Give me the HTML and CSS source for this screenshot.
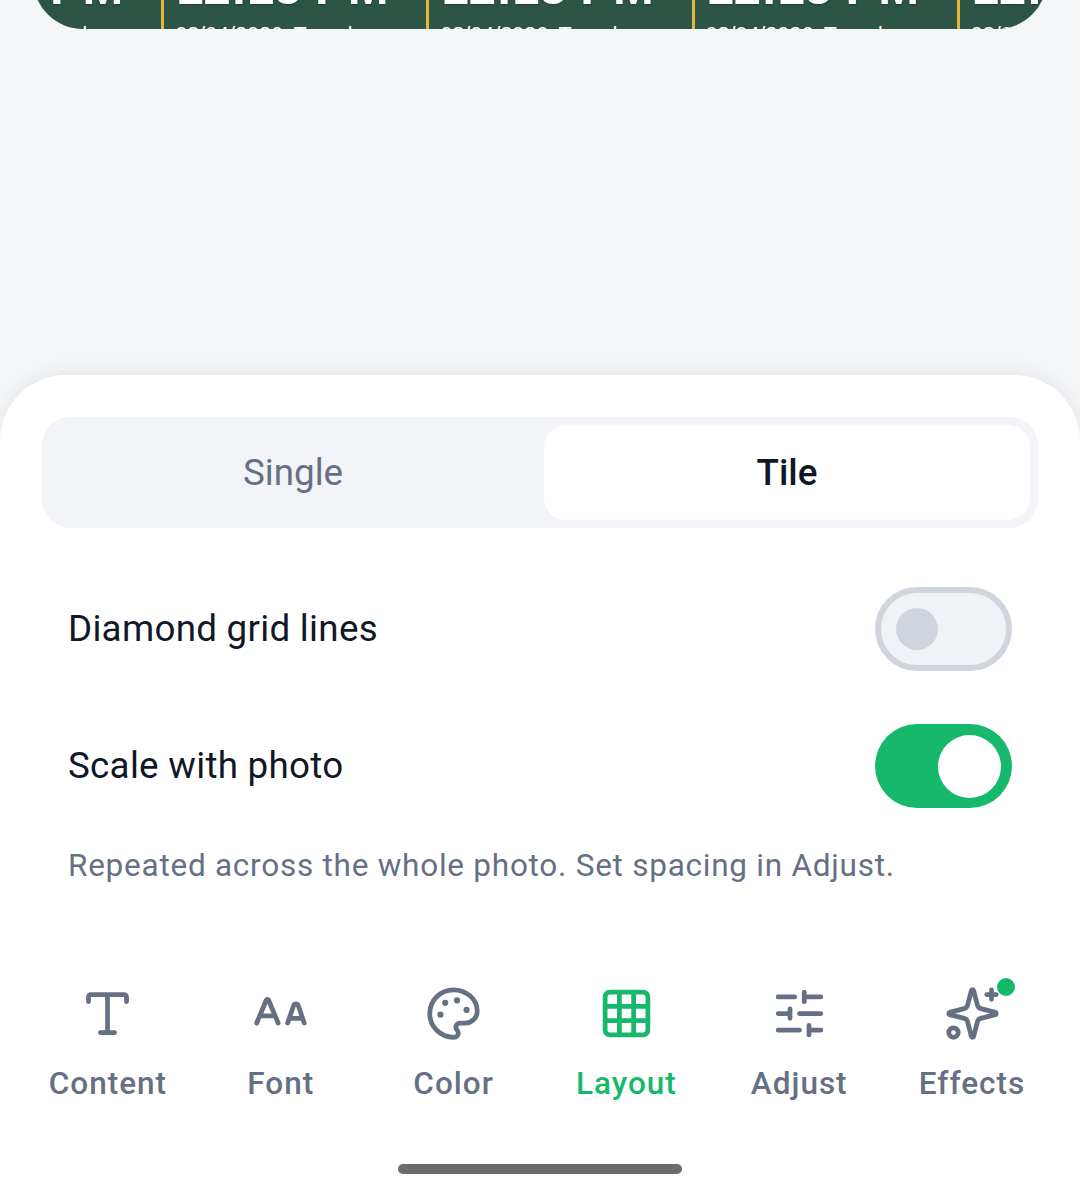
FILE: index.html
```html
<!DOCTYPE html>
<html lang="en">
<head>
  <meta charset="UTF-8">
  <title>Watermark layout</title>
  <link rel="stylesheet" href="styles.css">
</head>
<body>
<div class="photo">
  <div class="tiles">
    <div class="tile"><div class="tile-time">12:15 PM</div><div class="tile-date">08/04/2026 Tuesday</div></div>
    <div class="tile"><div class="tile-time">12:15 PM</div><div class="tile-date">08/04/2026 Tuesday</div></div>
    <div class="tile"><div class="tile-time">12:15 PM</div><div class="tile-date">08/04/2026 Tuesday</div></div>
    <div class="tile"><div class="tile-time">12:15 PM</div><div class="tile-date">08/04/2026 Tuesday</div></div>
    <div class="tile"><div class="tile-time">12:15 PM</div><div class="tile-date">08/04/2026 Tuesday</div></div>
  </div>
</div>

<div class="panel">
  <div class="segment">
    <div class="seg-item">Single</div>
    <div class="seg-item seg-on">Tile</div>
  </div>

  <div class="row">
    <span>Diamond grid lines</span>
    <div class="toggle"><i class="knob"></i></div>
  </div>
  <div class="row row-second">
    <span>Scale with photo</span>
    <div class="toggle toggle-on"><i class="knob"></i></div>
  </div>
  <p class="help">Repeated across the whole photo. Set spacing in Adjust.</p>

  <div class="tabs">
    <div class="tab">
      <svg class="ico" viewBox="0 0 24 24"><path d="M12 4v16M4 7V5a1 1 0 0 1 1-1h14a1 1 0 0 1 1 1v2M9 20h6"/></svg>
      <span>Content</span>
    </div>
    <div class="tab">
      <svg class="ico" viewBox="0 0 24 24"><path d="m15 16 2.536-7.328a1.02 1.02 0 0 1 1.928 0L22 16M15.697 14h5.606M2 16l4.039-9.69a.5.5 0 0 1 .923 0L11 16M3.304 13h6.392"/></svg>
      <span>Font</span>
    </div>
    <div class="tab">
      <svg class="ico" viewBox="0 0 24 24">
        <path d="M12 22a1 1 0 0 1 0-20 10 9 0 0 1 10 9 5 5 0 0 1-5 5h-2.25a1.75 1.75 0 0 0-1.4 2.8l.3.4a1.75 1.75 0 0 1-1.4 2.8z"/>
        <circle class="dot" cx="13.5" cy="6.5" r="1.3"/><circle class="dot" cx="17.5" cy="10.5" r="1.3"/>
        <circle class="dot" cx="6.5" cy="12.5" r="1.3"/><circle class="dot" cx="8.5" cy="7.5" r="1.3"/>
      </svg>
      <span>Color</span>
    </div>
    <div class="tab tab-on">
      <svg class="ico ico-grid" viewBox="0 0 24 24"><rect x="3" y="3" width="18" height="18" rx="2"/><path d="M3 9h18M3 15h18M9 3v18M15 3v18"/></svg>
      <span>Layout</span>
    </div>
    <div class="tab">
      <svg class="ico" viewBox="0 0 24 24"><path d="M3 5h7M14 5h7M14 3v4M3 12h5M12 12h9M8 10v4M3 19h9M16 19h5M16 17v4"/></svg>
      <span>Adjust</span>
    </div>
    <div class="tab">
      <div class="ico-wrap">
        <svg class="ico" viewBox="0 0 24 24">
          <path d="M9.937 15.5A2 2 0 0 0 8.5 14.063l-6.135-1.582a.5.5 0 0 1 0-.962L8.5 9.936A2 2 0 0 0 9.937 8.5l1.582-6.135a.5.5 0 0 1 .963 0L14.063 8.5A2 2 0 0 0 15.5 9.937l6.135 1.581a.5.5 0 0 1 0 .964L15.5 14.063a2 2 0 0 0-1.437 1.437l-1.582 6.135a.5.5 0 0 1-.963 0z"/>
          <path d="M20 2v4M22 4h-4"/>
          <circle cx="4" cy="20" r="2"/>
        </svg>
        <i class="badge"></i>
      </div>
      <span>Effects</span>
    </div>
  </div>

  <div class="home-bar"></div>
</div>
</body>
</html>
```

FILE: styles.css
```css
*{
  margin: 0;
  padding: 0;
  box-sizing: border-box;
}
html,body{
  height: 1200px;
  overflow: hidden;
}
body{
  display: flex;
  flex-direction: column;
  background: #f4f6f8;
  font-family: Roboto, "Liberation Sans", sans-serif;
  color: #101828;
}

/* photo, only its lower edge is still on screen */
.photo{
  flex: none;
  height: 69px;
  margin: -40px 33px 0;
  overflow: hidden;
  background: #2c5545;
  border-radius: 0 0 50px 50px;
}
.tiles{
  display: flex;
  margin-left: -134px;
}
.tile{
  flex: none;
  width: 265.2px;
  height: 69px;
  padding-left: 12px;
  border-right: 3px solid #e6b53a;
  color: #fff;
  font-family: "Liberation Sans", sans-serif;
  white-space: nowrap;
  text-shadow: 0 1px 2px rgba(0,0,0,.3);
}
.tile-time{
  height: 54px;
  margin-bottom: 9px;
  line-height: 54px;
  font-size: 49px;
  font-weight: bold;
}
.tile-date{
  margin-left: -1px;
  line-height: 24px;
  font-size: 21.5px;
  word-spacing: 5px;
}

.panel{
  flex: none;
  margin-top: 346px;
  height: 825px;
  padding: 42px 42px 0;
  background: #fff;
  border-radius: 66px 66px 0 0;
  box-shadow: 0 -3px 18px rgba(17,24,39,.07);
}

.segment{
  display: flex;
  gap: 8px;
  height: 111px;
  padding: 8px;
  background: #f2f4f8;
  border-radius: 28px;
}
.seg-item{
  flex: 1;
  border-radius: 22px;
  line-height: 95px;
  text-align: center;
  font-size: 36.75px;
  color: #667085;
}
.seg-on{
  background: #fff;
  font-weight: 500;
  color: #101828;
}

.row{
  display: flex;
  justify-content: space-between;
  align-items: center;
  margin-top: 59px;
  padding: 0 26px;
  font-size: 36.75px;
  letter-spacing: .28px;
}
.row span{
  margin-top: -2px;
}
.row-second{
  margin-top: 53px;
}
.toggle{
  display: flex;
  align-items: center;
  width: 137px;
  height: 84px;
  padding-left: 15px;
  background: #f0f2f6;
  border: 6px solid #d0d5dd;
  border-radius: 42px;
}
.knob{
  display: block;
  width: 42px;
  height: 42px;
  background: #d0d5dd;
  border-radius: 50%;
}
.toggle-on{
  justify-content: flex-end;
  padding: 0 11px 0 0;
  background: #16b96b;
  border: none;
}
.toggle-on .knob{
  width: 63px;
  height: 63px;
  background: #fff;
}

.help{
  margin-top: 38px;
  padding: 0 26px;
  line-height: 40px;
  font-size: 31.5px;
  letter-spacing: .75px;
  color: #667085;
}

.tabs{
  display: flex;
  margin: 98.5px -20.5px 0;
}
.tab{
  display: flex;
  flex-direction: column;
  align-items: center;
  width: 173px;
  font-size: 31.5px;
  font-weight: 500;
  letter-spacing: 1px;
  line-height: 40px;
  color: #667085;
}
.tab span{
  margin-top: 22.5px;
}
.ico{
  display: block;
  width: 57px;
  height: 57px;
  fill: none;
  stroke: #667085;
  stroke-width: 2;
  stroke-linecap: round;
  stroke-linejoin: round;
}
.dot{
  fill: #667085;
  stroke: none;
}
.ico-grid{
  stroke: #16b96b;
}
.tab-on{
  color: #16b96b;
}
.ico-wrap{
  position: relative;
}
.badge{
  position: absolute;
  top: -7px;
  right: -14px;
  width: 18px;
  height: 18px;
  background: #16b96b;
  border-radius: 50%;
}

.home-bar{
  width: 284px;
  height: 10px;
  margin: 60px auto 0;
  background: #6b6b6b;
  border-radius: 5px;
}
```
